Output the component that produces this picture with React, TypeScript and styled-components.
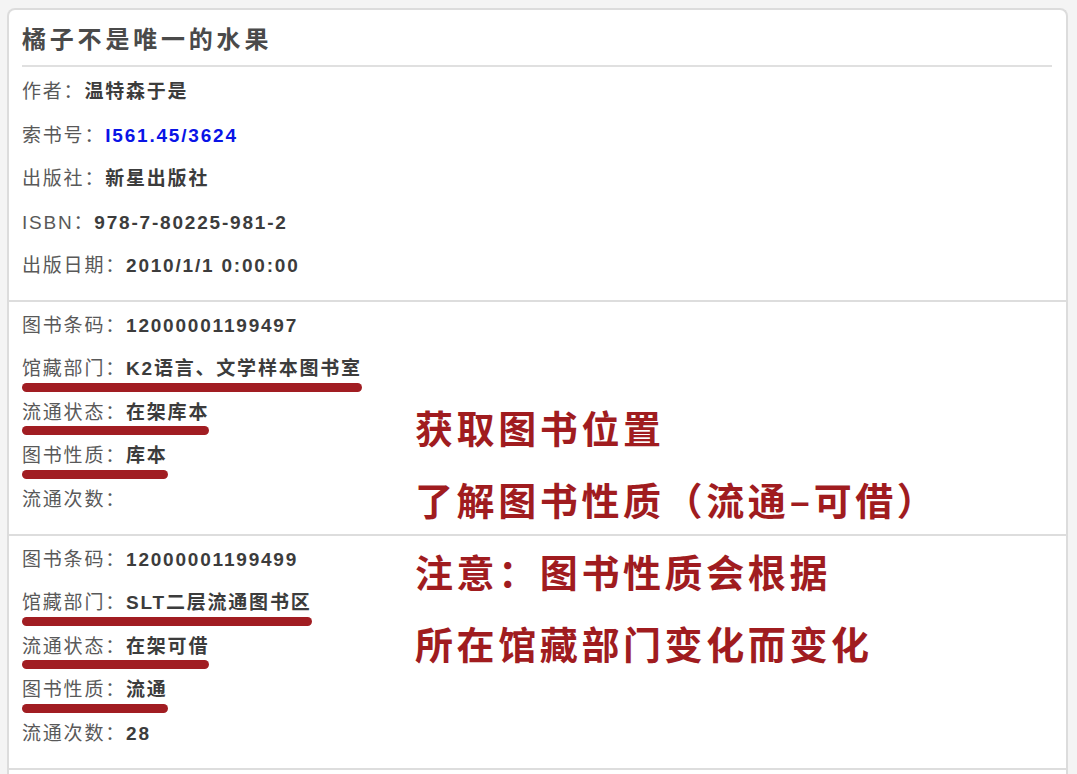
import React from 'react';
import styled, { createGlobalStyle } from 'styled-components';

const GlobalStyle = createGlobalStyle`
  html, body {
    margin: 0;
    padding: 0;
    background: #f4f4f4;
    overflow: hidden;
  }
  body {
    font-family: "Liberation Sans", "Noto Sans CJK SC", sans-serif;
  }
`;

const Card = styled.div`
  position: relative;
  margin: 8px 0 0 7px;
  width: 1061px;
  height: 900px;
  box-sizing: border-box;
  background: #ffffff;
  border: 2px solid #dcdcdc;
  border-bottom: none;
  border-radius: 8px 8px 0 0;
`;

const Header = styled.div`
  padding: 0 14px 14px 13px;
`;

const Title = styled.h1`
  margin: 0;
  height: 57px;
  display: flex;
  align-items: center;
  font-size: 24px;
  font-weight: 700;
  letter-spacing: 3.8px;
  color: #4a4a4a;
  border-bottom: 2px solid #e0e0e0;
  box-sizing: border-box;
`;

const Rows = styled.div`
  display: flex;
  flex-direction: column;
  align-items: flex-start;
  padding-top: 1px;
`;

const Section = styled.div`
  border-top: 2px solid #dddddd;
  padding: 0 14px 14.5px 13px;
  display: flex;
  flex-direction: column;
  align-items: flex-start;
`;

const Row = styled.div`
  height: 43.5px;
  display: flex;
  align-items: center;
`;

const Line = styled.span<{ $marked?: boolean }>`
  position: relative;
  font-size: 19px;
  letter-spacing: 1.8px;
  white-space: nowrap;

  ${(p) =>
    p.$marked &&
    `
    &::after {
      content: '';
      position: absolute;
      left: 0;
      right: 0;
      top: calc(50% + 16px);
      height: 9px;
      border-radius: 5px;
      background: #a11d22;
      filter: blur(0.6px);
    }
  `}
`;

const Label = styled.span`
  color: #595959;
  font-weight: 400;
`;

const Value = styled.span<{ $accent?: boolean }>`
  color: ${(p) => (p.$accent ? '#0a14e6' : '#3c3c3c')};
  font-weight: 700;
`;

const Notes = styled.div`
  position: absolute;
  left: 406px;
  top: 380px;
  display: flex;
  flex-direction: column;
`;

const Note = styled.div`
  height: 72px;
  display: flex;
  align-items: center;
  font-family: "Noto Sans CJK SC", sans-serif;
  font-size: 38px;
  font-weight: 700;
  letter-spacing: 3.6px;
  color: #a01c1f;
  white-space: nowrap;
`;

const info = [
  { label: '作者', value: '温特森于是' },
  { label: '索书号', value: 'I561.45/3624', accent: true },
  { label: '出版社', value: '新星出版社' },
  { label: 'ISBN', value: '978-7-80225-981-2' },
  { label: '出版日期', value: '2010/1/1 0:00:00' },
];

const copies = [
  {
    barcode: '12000001199497',
    dept: 'K2语言、文学样本图书室',
    status: '在架库本',
    nature: '库本',
    count: '',
  },
  {
    barcode: '12000001199499',
    dept: 'SLT二层流通图书区',
    status: '在架可借',
    nature: '流通',
    count: '28',
  },
];

const notes = [
  '获取图书位置',
  '了解图书性质（流通–可借）',
  '注意：图书性质会根据',
  '所在馆藏部门变化而变化',
];

const Field = ({
  label,
  value,
  accent,
  marked,
}: {
  label: string;
  value: string;
  accent?: boolean;
  marked?: boolean;
}) => (
  <Row>
    <Line $marked={marked}>
      <Label>{label}：</Label>
      <Value $accent={accent}>{value}</Value>
    </Line>
  </Row>
);

export default function App() {
  return (
    <>
      <GlobalStyle />
      <Card>
        <Header>
          <Title>橘子不是唯一的水果</Title>
          <Rows>
            {info.map((f) => (
              <Field key={f.label} {...f} />
            ))}
          </Rows>
        </Header>
        {copies.map((c) => (
          <Section key={c.barcode}>
            <Field label="图书条码" value={c.barcode} />
            <Field label="馆藏部门" value={c.dept} marked />
            <Field label="流通状态" value={c.status} marked />
            <Field label="图书性质" value={c.nature} marked />
            <Field label="流通次数" value={c.count} />
          </Section>
        ))}
        <Section />
        <Notes>
          {notes.map((n) => (
            <Note key={n}>{n}</Note>
          ))}
        </Notes>
      </Card>
    </>
  );
}
